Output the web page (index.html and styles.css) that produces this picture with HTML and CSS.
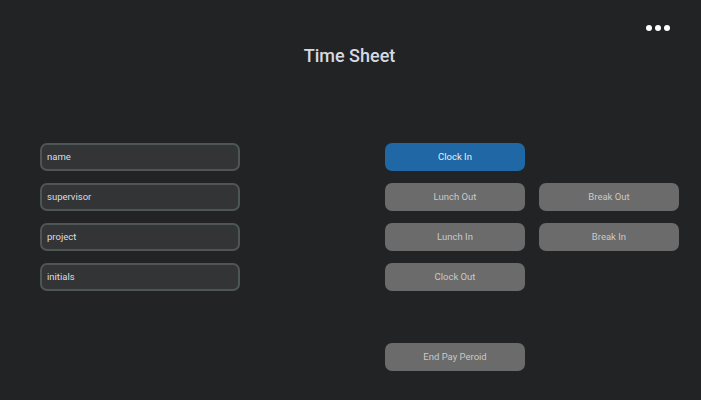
FILE: index.html
```html
<!DOCTYPE html>
<html>
<head>
<meta charset="utf-8">
<link rel="stylesheet" href="styles.css">
</head>
<body>
<div class="app">
  <header class="top">
    <div class="menu"><span class="dot"></span><span class="dot"></span><span class="dot"></span></div>
    <h1 class="title">Time Sheet</h1>
  </header>
  <main class="content">
    <div class="fields">
      <div class="field">name</div>
      <div class="field">supervisor</div>
      <div class="field">project</div>
      <div class="field">initials</div>
    </div>
    <div class="buttons">
      <div class="btn primary">Clock In</div>
      <div class="spacer"></div>
      <div class="btn">Lunch Out</div>
      <div class="btn">Break Out</div>
      <div class="btn">Lunch In</div>
      <div class="btn">Break In</div>
      <div class="btn">Clock Out</div>
      <div class="spacer"></div>
      <div class="spacer row"></div>
      <div class="spacer row"></div>
      <div class="btn">End Pay Peroid</div>
    </div>
  </main>
</div>
</body>
</html>
```
FILE: styles.css
```css
html, body {
  margin: 0;
  padding: 0;
  background: #222325;
  width: 701px;
  height: 400px;
  overflow: hidden;
  font-family: Roboto, "Liberation Sans", sans-serif;
}
.app {
  width: 701px;
  height: 400px;
}
.top {
  height: 143px;
  box-sizing: border-box;
  padding-top: 45px;
}
.menu {
  display: flex;
  gap: 3px;
  justify-content: flex-end;
  padding-right: 31px;
  height: 0;
  transform: translateY(-20px);
}
.dot {
  width: 6px;
  height: 6px;
  border-radius: 50%;
  background: #ffffff;
}
.title {
  margin: 0;
  text-align: center;
  font-size: 18px;
  font-weight: 500;
  color: #d5dae2;
  line-height: 22px;
  padding-right: 2px;
}
.content {
  display: flex;
  padding-left: 40px;
}
.fields {
  display: flex;
  flex-direction: column;
  gap: 12px;
  width: 200px;
}
.field {
  box-sizing: border-box;
  height: 28px;
  border: 2px solid #4e5555;
  border-radius: 7px;
  background: #333436;
  color: #dcdee0;
  font-size: 9.5px;
  line-height: 24px;
  padding-left: 5px;
}
.buttons {
  margin-left: 145px;
  display: grid;
  grid-template-columns: 140px 140px;
  grid-auto-rows: 28px;
  column-gap: 14px;
  row-gap: 12px;
}
.btn {
  background: #6b6b6b;
  color: #c9c9c9;
  border-radius: 7px;
  font-size: 9.5px;
  line-height: 28px;
  text-align: center;
}
.btn.primary {
  background: #1f68a5;
  color: #e6eef6;
}
```
